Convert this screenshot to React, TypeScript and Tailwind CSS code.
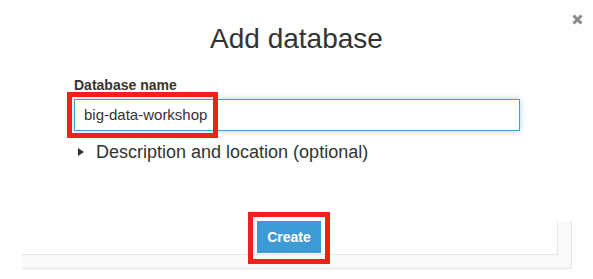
import React from "react";

export default function App() {
  return (
    <div
      className="relative w-[593px] h-[279px] bg-white overflow-hidden text-[#333] flex flex-col"
      style={{ fontFamily: '"Liberation Sans", Arial, Helvetica, sans-serif' }}
    >
      {/* close */}
      <button className="absolute right-[10px] top-[13px] w-[12px] h-[12px] flex items-center justify-center">
        <svg width="11" height="11" viewBox="0 0 11 11">
          <path d="M1.5 1.5 L9.5 9.5 M9.5 1.5 L1.5 9.5" stroke="#8a8a8a" strokeWidth="3" strokeLinecap="butt" />
        </svg>
      </button>

      <h2 className="pt-[23px] text-center text-[28px] leading-[32px] font-normal">Add database</h2>

      <div className="pl-[74px] pr-[73px] mt-[22px] flex flex-col">
        <label className="text-[14px] leading-[16px] font-bold">Database name</label>
        <div className="relative mt-[6px]">
          <div className="h-[32px] border border-[#4a9ad6] shadow-[0_0_6px_rgba(74,154,214,0.45)] flex items-center pl-[9px] text-[15px]">
            big-data-workshop
          </div>
          <div className="absolute -left-[7px] -top-[7px] w-[151px] h-[46px] border-[5px] border-[#f0211c]" />
        </div>
        <div className="mt-[11px] h-[20px] flex items-center gap-[12px] pl-[4px] text-[18px] leading-[20px]">
          <svg width="6" height="8" viewBox="0 0 6 8">
            <path d="M0 0 L6 4 L0 8 Z" fill="#333" />
          </svg>
          <span>Description and location (optional)</span>
        </div>
      </div>

      <div className="mt-[59px] ml-[22px] w-[550px] h-[48px] bg-[#f9f9f9] border-r border-b border-[#e6e6e6]">
        <div className="w-[536px] h-[34px] bg-white border-r border-b border-[#e6e6e6] flex justify-center">
          <div className="relative ml-[-1px]">
            <button className="w-[64px] h-[32px] bg-[#3d9ad6] text-white text-[14px] font-bold flex items-center justify-center">
              Create
            </button>
            <div className="absolute -left-[9px] -top-[9px] w-[82px] h-[52px] border-[5px] border-[#f0211c]" />
          </div>
        </div>
      </div>
    </div>
  );
}
